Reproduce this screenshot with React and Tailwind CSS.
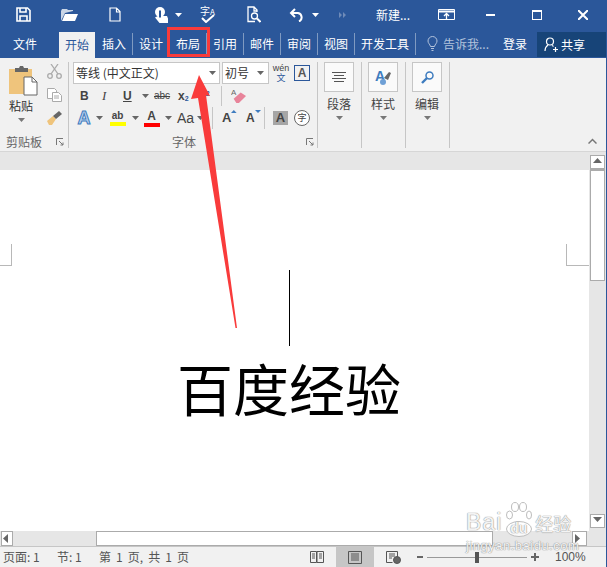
const CJK = 'font-["Noto_Sans_CJK_SC","Liberation_Sans",sans-serif]';

const tabs = [
  { label: '插入', w: 'w-[37px]' },
  { label: '设计', w: 'w-[37px]' },
  { label: '布局', w: 'w-[37px]' },
  { label: '引用', w: 'w-[37px]' },
  { label: '邮件', w: 'w-[37px]' },
  { label: '审阅', w: 'w-[37px]' },
  { label: '视图', w: 'w-[37px]' },
  { label: '开发工具', w: 'w-[61px]' },
];

function Caret({ className = 'text-[#666]' }) {
  return (
    <svg width="7" height="4" viewBox="0 0 7 4" className={className}>
      <path d="M0 0h7L3.5 4z" fill="currentColor" />
    </svg>
  );
}

function Launcher() {
  return (
    <svg width="8" height="8" viewBox="0 0 8 8" fill="none" stroke="#777">
      <path d="M.5 7V.5H7M3 3l4 4M7 4.5V7H4.5" />
    </svg>
  );
}

function TitleBar() {
  return (
    <div className="flex h-[29px] items-center bg-[#2b579a] text-white">
      {/* save */}
      <svg className="ml-[16px]" width="15" height="15" viewBox="0 0 15 15" fill="none" stroke="#fff" strokeWidth="1.6">
        <path d="M1 1h10.5L14 3.5V14H1z" />
        <path d="M4 1v4h6V1M4 14V9h7v5" />
      </svg>
      {/* open */}
      <svg className="ml-[30px]" width="17" height="14" viewBox="0 0 17 14">
        <path d="M0 3l1-2h5l1 1h5v1l-8 2-4 8z" fill="#fff" opacity=".75" />
        <path d="M4 6h13l-3 7H1z" fill="#fff" />
      </svg>
      {/* new doc */}
      <svg className="ml-[31px]" width="12" height="15" viewBox="0 0 12 15" fill="none" stroke="#fff" strokeWidth="1.2">
        <path d="M1 1h6.500L11 4.500V14H1zM7.500 1v4H11" />
      </svg>
      {/* touch */}
      <svg className="ml-[34px]" width="13" height="16" viewBox="0 0 13 16">
        <circle cx="5" cy="5" r="5" fill="#fff" />
        <path d="M2.800 6.500h4.400V9H12l1 2.500V16H4.500L0 10.500 2.800 9z" fill="#fff" />
        <path d="M5 3.500v7" stroke="#2b579a" strokeWidth="2" />
      </svg>
      <Caret className="ml-[7px] text-white" />
      {/* spell check */}
      <div className="relative ml-[17px] h-[20px] w-[17px]">
        <span className={`${CJK} absolute left-[1px] top-0 whitespace-nowrap text-[10px] leading-[12px]`}>
          字<span className="text-[8px]">A</span>
        </span>
        <svg className="absolute bottom-[2px] left-[2px]" width="14" height="9" viewBox="0 0 14 9" fill="none" stroke="#fff" strokeWidth="2">
          <path d="M1 4l4 4 8-7" />
        </svg>
      </div>
      {/* print preview */}
      <svg className="ml-[31px]" width="14" height="17" viewBox="0 0 14 17" fill="none" stroke="#fff" strokeWidth="1.3">
        <path d="M8 15.500H1V1h6l3 3v2M7 1v4h3" />
        <circle cx="7.500" cy="10" r="3" />
        <path d="M10 12.500l3.500 3.500" strokeWidth="2" />
      </svg>
      {/* undo */}
      <svg className="ml-[28px]" width="15" height="14" viewBox="0 0 15 14" fill="none" stroke="#fff" strokeWidth="2">
        <path d="M6 1L2 5l4 4M2 5h7a4.500 4.500 0 0 1 1 8.500" />
      </svg>
      <Caret className="ml-[8px] text-white" />
      {/* redo greyed */}
      <svg className="ml-[20px]" width="7" height="6" viewBox="0 0 7 6" fill="#6f8bb8">
        <path d="M0 0l3 3-3 3zM4 0l3 3-3 3z" />
      </svg>
      <span className={`${CJK} ml-[30px] w-[36px] whitespace-nowrap text-[12px]`}>新建...</span>
      {/* ribbon options */}
      <svg className="ml-[26px]" width="17" height="11" viewBox="0 0 17 11" fill="none" stroke="#fff">
        <path d="M.5 .5h16v10H.5z" />
        <path d="M.5 2.500h16" strokeWidth="2" />
        <path d="M8.500 10V5M6 7l2.500-2.500L11 7" strokeWidth="1.300" />
      </svg>
      <div className="ml-[31px] h-[2px] w-[9px] bg-white" />
      <div className="ml-[37px] h-[10px] w-[10px] border border-t-[2px] border-white" />
      <svg className="ml-[36px]" width="10" height="10" viewBox="0 0 10 10" stroke="#fff" strokeWidth="2">
        <path d="M0 0l10 10M10 0L0 10" />
      </svg>
    </div>
  );
}

function TabBar() {
  return (
    <div className={`${CJK} flex h-[29px] items-stretch bg-[#2b579a] text-[12px] text-white`}>
      <div className="flex w-[59px] items-center justify-center pr-[9px]">文件</div>
      <div className="mt-[3px] flex w-[36px] items-center justify-center bg-[#f1f1f1] text-[#2b579a]">开始</div>
      <div className="mb-[3px] mt-[4px] flex">
        <div className="w-px" />
        {tabs.map((t) => (
          <div key={t.label} className={`flex ${t.w} items-center justify-center border-r border-[#7f9ac1]`}>
            {t.label}
          </div>
        ))}
      </div>
      <div className="flex items-center pl-[11px] text-[#b3c3dc]">
        <svg width="11" height="15" viewBox="0 0 11 15" fill="none" stroke="currentColor">
          <path d="M3.500 10.500C3 8 1 7.500 1 5a4.500 4.500 0 0 1 9 0c0 2.500-2 3-2.500 5.500zM4 12.500h3M4.500 14.500h2" />
        </svg>
        <span className="ml-[5px] w-[46px] whitespace-nowrap">告诉我...</span>
      </div>
      <div className="ml-[14px] flex items-center">登录</div>
      <div className="mb-px ml-[10px] mt-[3px] flex w-[69px] items-center bg-[#174478] pl-[7px]">
        <svg width="14" height="15" viewBox="0 0 14 15" fill="none" stroke="#fff" strokeWidth="1.200">
          <circle cx="6" cy="4.500" r="3.500" />
          <path d="M1 14c0-3 1.500-5 3-6M8 8.500c.5.200 1 .500 1.500 1M9 12.500h5M11.500 10v5" />
        </svg>
        <span className="ml-[3px]">共享</span>
      </div>
    </div>
  );
}

function Sep({ className = '' }) {
  return <div className={`w-px bg-[#c6c6c6] ${className}`} />;
}

function ClipboardGroup() {
  return (
    <div className="flex h-[88px] w-[68px] shrink-0 flex-col">
      <div className="flex h-[72px]">
        <div className="flex w-[46px] flex-col items-start pl-[9px] pt-[4px]">
          <svg width="29" height="30" viewBox="0 0 29 30">
            <path d="M0 3h23v25H0z" fill="#efc47c" />
            <path d="M6 2h4l1-2h3l1 2h4v4H6z" fill="#666" />
            <path d="M15 11h8l5 5v13H15z" fill="#fff" stroke="#666" />
            <path d="M23 11v5h5" fill="none" stroke="#666" />
          </svg>
          <span className={`${CJK} mt-[2px] text-[12px] leading-[16px] text-[#333]`}>粘贴</span>
          <Caret className="ml-[9px] mt-[4px] text-[#777]" />
        </div>
        <div className="flex flex-col items-center gap-[9px] pt-[2px]">
          <svg width="15" height="15" viewBox="0 0 15 15" fill="none" stroke="#aaa" strokeWidth="1.300">
            <circle cx="3" cy="12" r="2.300" />
            <circle cx="12" cy="12" r="2.300" />
            <path d="M4 10L11 0M11 10L4 0" />
          </svg>
          <svg width="15" height="14" viewBox="0 0 15 14" fill="#fff" stroke="#aaa">
            <path d="M.5 .5h7l2 2v8h-9z" />
            <path d="M5.500 4.500h6l3 3v6h-9z" />
            <path d="M7 8h5M7 10h5" />
          </svg>
          <svg width="16" height="14" viewBox="0 0 16 14">
            <path d="M1 10l6-5 3 3-4 6H3z" fill="#efc47c" />
            <path d="M7 5l6-5 3 3-6 5z" fill="#666" />
          </svg>
        </div>
      </div>
      <div className="flex flex-1 items-start justify-between pl-[6px] pr-[4px]">
        <span className={`${CJK} text-[12px] leading-[16px] text-[#666]`}>剪贴板</span>
        <span className="mt-[4px]"><Launcher /></span>
      </div>
    </div>
  );
}

function FontGroup() {
  return (
    <div className="flex h-[88px] w-[248px] shrink-0 flex-col pl-[4px]">
      {/* row 1 */}
      <div className="flex h-[22px] items-center">
        <div className="flex h-[22px] w-[147px] items-center justify-between border border-[#c6c6c6] bg-white pl-[2px] pr-[3px]">
          <span className={`${CJK} text-[12px] text-[#333]`}>等线 (中文正文)</span>
          <Caret />
        </div>
        <div className="ml-[2px] flex h-[22px] w-[47px] items-center justify-between border border-[#c6c6c6] bg-white pl-[2px] pr-[4px]">
          <span className={`${CJK} text-[12px] text-[#333]`}>初号</span>
          <Caret />
        </div>
        <div className="ml-[3px] flex w-[18px] flex-col items-center">
          <span className='font-["Liberation_Sans",sans-serif] text-[9px] leading-[10px] text-[#444]'>wén</span>
          <span className={`${CJK} text-[9px] leading-[10px] text-[#2b579a]`}>文</span>
        </div>
        <div className='ml-[4px] flex h-[16px] w-[16px] items-center justify-center border border-[#2b579a] font-["Liberation_Sans",sans-serif] text-[12px] font-bold text-[#555]'>
          A
        </div>
      </div>
      {/* row 2 */}
      <div className='flex h-[23px] items-center pl-[7px] font-["Liberation_Sans",sans-serif] text-[#444]'>
        <span className="w-[22px] text-[12px] font-bold">B</span>
        <span className='w-[21px] font-["Liberation_Serif",serif] text-[13px] italic'>I</span>
        <span className="w-[19px] text-[12px] font-bold underline">U</span>
        <Caret />
        <span className="ml-[5px] w-[24px] text-[10px] line-through">abc</span>
        <span className="w-[21px] text-[12px] font-bold">
          x<sub className="text-[7px] text-[#2b579a]">2</sub>
        </span>
        <span className="w-[21px] text-[12px] font-bold">
          x<sup className="text-[7px] text-[#2b579a]">2</sup>
        </span>
        <Sep className="ml-[1px] h-[20px]" />
        <svg className="ml-[9px]" width="15" height="16" viewBox="0 0 17 18">
          <path d="M3 12l8-7 6 4-8 8H6z" fill="#e8849a" />
          <text x="0" y="8" fontSize="9" fontFamily="Liberation Sans" fill="#666">A</text>
        </svg>
      </div>
      {/* row 3 */}
      <div className='flex h-[22px] items-center pl-[1px] font-["Liberation_Sans",sans-serif] text-[#444]'>
        <span className="w-[20px] text-center text-[18px] font-bold leading-[20px] text-[#bcd3ee] [-webkit-text-stroke:1px_#3e7cbf]">A</span>
        <span className="ml-[2px] w-[10px]"><Caret /></span>
        <div className="ml-[3px] flex w-[17px] flex-col items-center">
          <span className="text-[10px] font-bold leading-[11px]">ab</span>
          <div className="mt-[1px] h-[4px] w-[16px] bg-[#ffff00]" />
        </div>
        <span className="ml-[6px] w-[9px]"><Caret /></span>
        <div className="ml-[2px] flex w-[17px] flex-col items-center">
          <span className="text-[12px] font-bold leading-[12px]">A</span>
          <div className="mt-[1px] h-[4px] w-[16px] bg-[#ff0000]" />
        </div>
        <span className="ml-[5px] w-[9px]"><Caret /></span>
        <span className="ml-[3px] w-[19px] text-[14px]">Aa</span>
        <span className="ml-[1px] w-[7px]"><Caret /></span>
        <Sep className="ml-[8px] h-[22px]" />
        <div className="ml-[9px] flex w-[15px] items-start">
          <span className="text-[13px] font-bold">A</span>
          <svg className="mt-[2px]" width="6" height="3" viewBox="0 0 6 3" fill="#3e7cbf"><path d="M0 3h6L3 0z" /></svg>
        </div>
        <div className="ml-[9px] flex w-[15px] items-start">
          <span className="text-[12px] font-bold">A</span>
          <svg className="mt-[1px]" width="6" height="3" viewBox="0 0 6 3" fill="#3e7cbf"><path d="M0 0h6L3 3z" /></svg>
        </div>
        <Sep className="ml-[3px] h-[22px]" />
        <div className="ml-[8px] flex h-[14px] w-[15px] items-center justify-center bg-[#a6a6a6] text-[13px] font-bold text-[#444]">A</div>
        <div className={`${CJK} ml-[6px] flex h-[16px] w-[16px] items-center justify-center rounded-full border border-[#666] bg-white text-[9px]`}>字</div>
      </div>
      {/* label */}
      <div className="relative flex flex-1 items-start justify-center pr-[22px]">
        <span className={`${CJK} mt-[5px] text-[12px] leading-[16px] text-[#666]`}>字体</span>
        <span className="absolute right-[3px] top-[9px]"><Launcher /></span>
      </div>
    </div>
  );
}

function BigGroup({ label, children }) {
  return (
    <div className="w-[43px] shrink-0 pl-[6px]">
      <div className="flex w-[30px] flex-col items-center">
        <div className="flex h-[30px] w-[30px] items-center justify-center border border-[#c6c6c6] bg-[#fafafa]">
          {children}
        </div>
        <span className={`${CJK} mt-[2px] whitespace-nowrap text-[12px] leading-[20px] text-[#444]`}>{label}</span>
        <Caret className="mt-[2px] text-[#777]" />
      </div>
    </div>
  );
}

function Ribbon() {
  return (
    <div className="flex h-[94px] items-stretch border-b border-[#d6d6d6] bg-[#f1f1f1] pt-[4px]">
      <ClipboardGroup />
      <Sep className="h-[86px]" />
      <FontGroup />
      <Sep className="h-[86px]" />
      <BigGroup label="段落">
        <svg width="14" height="11" viewBox="0 0 14 11" stroke="#555"><path d="M0 .5h14M2 3.500h10M0 6.500h14M2 9.500h10" /></svg>
      </BigGroup>
      <Sep className="h-[86px]" />
      <BigGroup label="样式">
        <svg width="16" height="17" viewBox="0 0 16 17">
          <text x="0" y="12" fontSize="14" fontWeight="700" fontFamily="Liberation Sans" fill="#3e7cbf">A</text>
          <path d="M9 9l5-6 2 1-3 7z" fill="#666" />
          <circle cx="8" cy="13" r="3" fill="#6fa0d6" />
        </svg>
      </BigGroup>
      <Sep className="h-[86px]" />
      <BigGroup label="编辑">
        <svg width="13" height="13" viewBox="0 0 13 13" fill="none" stroke="#3e7cbf" strokeWidth="1.500">
          <circle cx="8.500" cy="4.500" r="3.500" />
          <path d="M6 7L1 12" strokeWidth="2.400" />
        </svg>
      </BigGroup>
      <Sep className="h-[86px]" />
      <div className="flex flex-1 items-end justify-end pb-[7px] pr-[9px]">
        <svg width="9" height="6" viewBox="0 0 9 6" fill="none" stroke="#777" strokeWidth="1.500"><path d="M.5 5.500l4-4 4 4" /></svg>
      </div>
    </div>
  );
}

function ScrollButton({ dir, className = '' }) {
  const paths = { up: 'M0 5h9L4.500 0z', down: 'M0 0h9L4.500 5z', left: 'M5 0v9L0 4.500z', right: 'M0 0v9l5-4.500z' };
  return (
    <div className={`flex items-center justify-center border border-[#ababab] bg-white ${className}`}>
      <svg width="9" height="9" viewBox="0 0 9 9" fill="#666"><path d={paths[dir]} /></svg>
    </div>
  );
}

function Document() {
  return (
    <div className="flex min-h-0 flex-1">
      <div className="flex min-w-0 flex-1 flex-col">
        <div className="h-[18px] bg-[#e6e6e6]" />
        <div className="flex flex-1 flex-col bg-white pt-[74px]">
          <div className="flex h-[22px] justify-between">
            <div className="h-[22px] w-[12px] border-b border-r border-[#b8b8b8]" />
            <div className="h-[22px] w-[23px] border-b border-l border-[#b8b8b8]" />
          </div>
          <div className="ml-[289px] mt-[4px] h-[76px] w-px bg-black" />
          <div className={`${CJK} ml-[177px] mt-[6px] whitespace-nowrap text-[56px] leading-[70px] text-black`}>百度经验</div>
        </div>
      </div>
      <div className="flex w-[17px] flex-col bg-[#e6e6e6] pl-px pt-[3px]">
        <ScrollButton dir="up" className="h-[14px] w-[15px]" />
        <div className="h-[112px] w-[15px] border border-t-[2px] border-[#ababab] bg-white" />
        <ScrollButton dir="down" className="mb-[3px] mt-auto h-[14px] w-[15px]" />
      </div>
    </div>
  );
}

function HScroll() {
  return (
    <div className="flex h-[15px] items-stretch bg-[#e6e6e6] pl-px">
      <ScrollButton dir="left" className="w-[12px]" />
      <div className="ml-[83px] w-[397px] border border-[#ababab] bg-white" />
      <ScrollButton dir="right" className="ml-[79px] w-[15px]" />
    </div>
  );
}

function StatusBar() {
  return (
    <div className={`${CJK} flex h-[21px] items-stretch border-t border-[#c6c6c6] bg-[#f1f1f1] text-[12px] text-[#555]`}>
      <span className="ml-[3px] flex w-[54px] items-center">页面: 1</span>
      <span className="flex w-[42px] items-center">节: 1</span>
      <span className="flex w-[205px] items-center whitespace-nowrap [word-spacing:2.4px]">第 1 页, 共 1 页</span>
      <div className="ml-[6px] flex w-[26px] items-center">
        <svg width="14" height="13" viewBox="0 0 14 13" fill="none" stroke="#555">
          <path d="M.5 .5h6v11h-6zM7 .5h6.500v11H7zM2 3h3M2 5h3M2 7h3M9 3h3M9 5h3M9 7h3" />
        </svg>
      </div>
      <div className="flex w-[38px] items-center justify-center bg-[#c6c6c6]">
        <svg width="14" height="13" viewBox="0 0 14 13" fill="none" stroke="#555">
          <path d="M.5 .5h13v12H.5zM3 3h8M3 5h8M3 7h8M3 9h8" />
        </svg>
      </div>
      <div className="ml-[12px] flex w-[23px] items-center">
        <svg width="15" height="13" viewBox="0 0 15 13" fill="none" stroke="#555">
          <path d="M.5 .5h11v6M.5 .5v11h6M3 3h6M3 5h6M3 7h3" />
          <circle cx="11" cy="9" r="3.500" fill="#666" />
        </svg>
      </div>
      <div className="ml-[8px] flex items-center">
        <div className="h-[2px] w-[6px] bg-[#666]" />
        <div className="relative ml-[4px] h-px w-[100px] bg-[#999]">
          <div className="absolute left-[48px] top-[-5px] h-[11px] w-[4px] bg-[#555]" />
        </div>
        <svg className="ml-[4px]" width="8" height="8" viewBox="0 0 8 8" stroke="#666" strokeWidth="2"><path d="M0 4h8M4 0v8" /></svg>
      </div>
      <span className='ml-[16px] flex items-center font-["Liberation_Sans",sans-serif] text-[12px] leading-[14px]'>100%</span>
    </div>
  );
}

function Watermark() {
  return (
    <div className='absolute left-[466px] top-[502px] w-[108px] font-["Liberation_Sans",sans-serif] text-white/90 [text-shadow:0_0_1px_#8a8a8a,0_0_1px_#8a8a8a]'>
      <div className="flex h-[35px] items-end">
        <span className="text-[23px] leading-[30px] tracking-[1px]">Bai</span>
        <div className="relative ml-[4px] h-[35px] w-[26px]">
          <svg className="absolute left-0 top-0" width="26" height="35" viewBox="0 0 26 35" fill="#fff" fillOpacity=".75" stroke="#bdbdbd">
            <ellipse cx="3.500" cy="13" rx="3" ry="4" />
            <ellipse cx="9" cy="5" rx="3.500" ry="4.500" />
            <ellipse cx="17" cy="5" rx="3.500" ry="4.500" />
            <ellipse cx="23" cy="13" rx="2.500" ry="4" />
            <ellipse cx="13" cy="27" rx="12.500" ry="7.500" />
          </svg>
          <span className="absolute bottom-[1px] left-[4px] text-[14px] font-bold leading-[16px]">du</span>
        </div>
        <span className={`${CJK} mb-[3px] ml-[3px] text-[18px] leading-[22px]`}>经验</span>
      </div>
      <div className="mt-[4px] whitespace-nowrap text-[13px] leading-[9px] tracking-[0.5px]">jingyan.baidu.com</div>
    </div>
  );
}

export default function App() {
  return (
    <div className="relative flex h-[567px] w-[607px] flex-col overflow-hidden border-r border-[#2b579a] bg-white">
      <TitleBar />
      <TabBar />
      <Ribbon />
      <Document />
      <HScroll />
      <StatusBar />

      {/* red callout drawn on top of the screenshot */}
      <div className="absolute left-[167px] top-[27px] h-[30px] w-[43px] border-[3px] border-[#f93b3b]" />
      <svg className="absolute left-0 top-0" width="607" height="567" viewBox="0 0 607 567">
        <path d="M199 75L210 96 206 95 237 328 235.500 328 198 98 191 99z" fill="#f93b3b" />
      </svg>

      <Watermark />
    </div>
  );
}
